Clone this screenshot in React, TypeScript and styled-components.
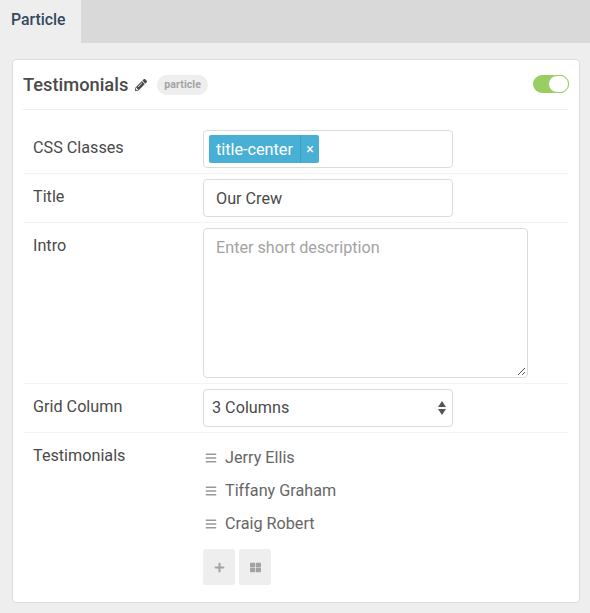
import React from 'react'
import styled, { createGlobalStyle } from 'styled-components'
import { FaBars, FaPencilAlt, FaPlus, FaThLarge } from 'react-icons/fa'

const GlobalStyle = createGlobalStyle`
  html, body {
    margin: 0;
    padding: 0;
    background: #eeeeee;
    font-family: Roboto, "Liberation Sans", sans-serif;
    color: #424753;
  }
  * {
    box-sizing: border-box;
  }
`

const Page = styled.div`
  width: 590px;
  height: 613px;
  overflow: hidden;
  background: #eeeeee;
`

const TabBar = styled.div`
  display: flex;
  height: 43px;
  background: #d9d9d9;
`

const Tab = styled.div`
  width: 81px;
  padding-top: 11px;
  padding-left: 11px;
  background: #eeeeee;
  font-size: 15.8px;
  line-height: 18px;
  font-weight: 500;
  color: #34495e;
`

const Card = styled.section`
  width: 568px;
  height: 544px;
  margin: 16px 0 0 12px;
  padding: 0 11px 0 10px;
  background: #fff;
  border: 1px solid #dcdcdc;
  border-radius: 4px;
`

const CardHeader = styled.header`
  display: flex;
  align-items: center;
  height: 50px;
  margin-bottom: 15px;
  border-bottom: 1px solid #ececec;
`

const CardTitle = styled.h2`
  margin: 0;
  font-size: 18.3px;
  line-height: 50px;
  font-weight: 500;
  color: #4a4a4a;
`

const EditIcon = styled(FaPencilAlt)`
  width: 12px;
  height: 12px;
  margin-left: 7px;
  color: #4a4a4a;
`

const Badge = styled.span`
  margin-left: 10px;
  padding: 0 7px;
  height: 20px;
  border-radius: 10px;
  background: #eeeeee;
  color: #a3a3a3;
  font-size: 10.5px;
  font-weight: 700;
  line-height: 20px;
  letter-spacing: 0.1px;
`

const Toggle = styled.div`
  position: relative;
  width: 36px;
  height: 18px;
  margin-left: auto;
  margin-right: -1px;
  margin-top: -1px;
  border-radius: 9px;
  background: #98ce62;
`

const ToggleKnob = styled.span`
  position: absolute;
  top: 0;
  right: 0;
  width: 21px;
  height: 18px;
  border-radius: 9px;
  background: #fff;
  border: 1px solid #98ce62;
`

const Row = styled.div`
  display: flex;
  padding: 5px 0;
  border-bottom: 1px solid #f3f3f3;

  &:last-child {
    border-bottom: none;
  }
`

const Label = styled.label`
  flex: none;
  width: 180px;
  padding: 9px 0 0 10px;
  font-size: 16.2px;
  line-height: 18px;
  color: #4a4a4a;
`

const Field = styled.div<{ $width?: number }>`
  display: flex;
  align-items: center;
  width: ${props => props.$width ?? 250}px;
  height: 38px;
  padding: 0 12px;
  background: #fff;
  border: 1px solid #dcdcdc;
  border-radius: 4px;
  font-size: 16.2px;
  color: #4a4a4a;
`

const TagField = styled(Field)`
  padding: 0 5px;
`

const Tag = styled.span`
  display: flex;
  align-items: center;
  height: 28px;
  border-radius: 2px;
  background: #48b0d5;
  color: #fff;
  font-size: 16.2px;
`

const TagText = styled.span`
  padding: 0 7px;
`

const TagRemove = styled.span`
  display: flex;
  align-items: center;
  justify-content: center;
  width: 19px;
  height: 100%;
  border-left: 1px solid #3f9fc2;
  font-size: 14px;
`

const TextArea = styled.div`
  position: relative;
  width: 325px;
  height: 150px;
  padding: 9px 12px;
  background: #fff;
  border: 1px solid #dcdcdc;
  border-radius: 4px;
  font-size: 16.2px;
  line-height: 19px;
  color: #a3a3a3;
`

const Grip = styled.svg`
  position: absolute;
  right: 1px;
  bottom: 1px;
  width: 9px;
  height: 9px;
`

const SelectField = styled(Field)`
  justify-content: space-between;
  padding: 0 6px 2px 8px;
`

const SelectArrows = styled.svg`
  margin-top: 2px;
`

const Items = styled.div`
  padding-top: 3px;
`

const Item = styled.div`
  display: flex;
  align-items: center;
  height: 33px;
  padding-left: 2px;
  font-size: 16.2px;
  color: #666666;
`

const Handle = styled(FaBars)`
  width: 12px;
  height: 12px;
  margin-right: 8px;
  color: #999999;
`

const Actions = styled.div`
  display: flex;
  gap: 4px;
  margin-top: 9px;
`

const ActionButton = styled.button`
  display: flex;
  align-items: center;
  justify-content: center;
  width: 32px;
  height: 36px;
  padding: 0;
  border: none;
  border-radius: 3px;
  background: #eeeeee;
  color: #a3a3a3;
  font-size: 11px;
`

const App: React.FC = () => {
  return (
    <Page>
      <GlobalStyle />
      <TabBar>
        <Tab>Particle</Tab>
      </TabBar>
      <Card>
        <CardHeader>
          <CardTitle>Testimonials</CardTitle>
          <EditIcon />
          <Badge>particle</Badge>
          <Toggle>
            <ToggleKnob />
          </Toggle>
        </CardHeader>
        <Row>
          <Label>CSS Classes</Label>
          <TagField>
            <Tag>
              <TagText>title-center</TagText>
              <TagRemove>×</TagRemove>
            </Tag>
          </TagField>
        </Row>
        <Row>
          <Label>Title</Label>
          <Field>Our Crew</Field>
        </Row>
        <Row>
          <Label>Intro</Label>
          <TextArea>
            Enter short description
            <Grip viewBox="0 0 9 9">
              <path d="M1 8 8 1M5 8 8 5" stroke="#555" strokeWidth="1" fill="none" />
            </Grip>
          </TextArea>
        </Row>
        <Row>
          <Label>Grid Column</Label>
          <SelectField>
            3 Columns
            <SelectArrows width="8" height="14" viewBox="0 0 8 14">
              <path d="M4 0 8 6H0ZM0 8H8L4 14Z" fill="#555" />
            </SelectArrows>
          </SelectField>
        </Row>
        <Row>
          <Label>Testimonials</Label>
          <div>
            <Items>
              {['Jerry Ellis', 'Tiffany Graham', 'Craig Robert'].map(name => (
                <Item key={name}>
                  <Handle />
                  {name}
                </Item>
              ))}
            </Items>
            <Actions>
              <ActionButton>
                <FaPlus />
              </ActionButton>
              <ActionButton>
                <FaThLarge />
              </ActionButton>
            </Actions>
          </div>
        </Row>
      </Card>
    </Page>
  )
}

export default App
